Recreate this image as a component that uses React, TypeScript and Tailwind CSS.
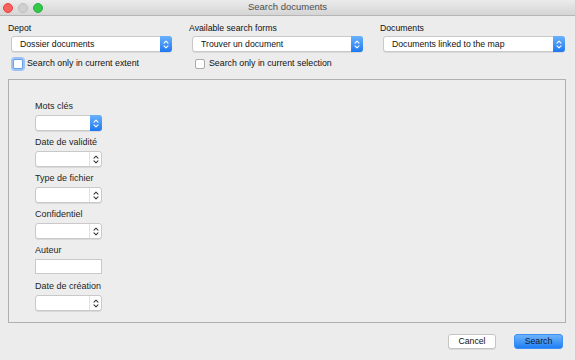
import React from 'react';

const font = { fontFamily: '"Liberation Sans", Arial, sans-serif' };

const Chevrons = ({ color }: { color: string }) => (
  <svg width="6" height="9" viewBox="0 0 6 9" fill="none" stroke={color} strokeWidth="1.1" strokeLinecap="round" strokeLinejoin="round">
    <path d="M1 3.2 L3 1.2 L5 3.2" />
    <path d="M1 5.8 L3 7.8 L5 5.8" />
  </svg>
);

const BlueSelect = ({ label, width }: { label: string; width: string }) => (
  <div className={`flex h-[16px] ${width} rounded-[3px] bg-white border border-[#c9c9c9] shadow-[0_1px_0_rgba(0,0,0,0.08)]`}>
    <div className="flex-1 pl-[8px] text-[8.7px] leading-[14px] text-[#111] truncate">{label}</div>
    <div className="w-[12px] -my-px -mr-px flex items-center justify-center rounded-r-[3px] bg-gradient-to-b from-[#69b1fb] to-[#1a78f0]">
      <Chevrons color="#ffffff" />
    </div>
  </div>
);

const Combo = ({ blue }: { blue?: boolean }) => (
  <div className="flex h-[16px] w-[67px] rounded-[3px] bg-white border border-[#c9c9c9] shadow-[0_1px_0_rgba(0,0,0,0.08)]">
    <div className="flex-1" />
    {blue ? (
      <div className="w-[12px] -my-px -mr-px flex items-center justify-center rounded-r-[3px] bg-gradient-to-b from-[#69b1fb] to-[#1a78f0]">
        <Chevrons color="#ffffff" />
      </div>
    ) : (
      <div className="w-[12px] flex items-center justify-center border-l border-[#e2e2e2]">
        <Chevrons color="#3a3a3a" />
      </div>
    )}
  </div>
);

const Checkbox = ({ focused }: { focused?: boolean }) => (
  <div
    className={`w-[10px] h-[10px] rounded-[2px] bg-white border ${
      focused ? 'border-[#6aa0e8] ring-2 ring-[#9cc3f5]' : 'border-[#a9a9a9]'
    }`}
  />
);

const fields = [
  { label: 'Mots clés', kind: 'blue' },
  { label: 'Date de validité', kind: 'combo' },
  { label: 'Type de fichier', kind: 'combo' },
  { label: 'Confidentiel', kind: 'combo' },
  { label: 'Auteur', kind: 'text' },
  { label: 'Date de création', kind: 'combo' },
];

export default function App() {
  return (
    <div className="w-[576px] h-[360px] bg-[#ececec] flex flex-col overflow-hidden border-r border-[#cfcfcf]" style={font}>
      {/* title bar */}
      <div className="relative h-[16px] flex items-center justify-center bg-gradient-to-b from-[#ebebeb] to-[#d5d5d5] border-b border-[#b5b5b5]">
        <div className="absolute left-[3px] top-[2.5px] flex gap-[5px]">
          <div className="w-[10px] h-[10px] rounded-full bg-[#fc605c] border border-[#e0443e]" />
          <div className="w-[10px] h-[10px] rounded-full bg-[#cfcfcf] border border-[#bdbdbd]" />
          <div className="w-[10px] h-[10px] rounded-full bg-[#34c84a] border border-[#2aac3b]" />
        </div>
        <span className="text-[9.5px] text-[#4d4d4d]">Search documents</span>
      </div>

      {/* top selectors */}
      <div className="flex pl-[8px] pt-[6px]">
        <div className="w-[181px] flex flex-col">
          <div className="h-[12px] text-[8.7px] leading-[12px] text-[#111]">Depot</div>
          <div className="mt-[2px] ml-[3px]">
            <BlueSelect label="Dossier documents" width="w-[161px]" />
          </div>
          <div className="mt-[6px] ml-[5px] flex items-center gap-[4px] h-[12px]">
            <Checkbox focused />
            <span className="text-[8.8px] text-[#111]">Search only in current extent</span>
          </div>
        </div>
        <div className="w-[191px] flex flex-col">
          <div className="h-[12px] text-[8.7px] leading-[12px] text-[#111]">Available search forms</div>
          <div className="mt-[2px] ml-[3px]">
            <BlueSelect label="Trouver un document" width="w-[171px]" />
          </div>
          <div className="mt-[6px] ml-[6px] flex items-center gap-[4px] h-[12px]">
            <Checkbox />
            <span className="text-[8.8px] text-[#111]">Search only in current selection</span>
          </div>
        </div>
        <div className="flex-1 flex flex-col">
          <div className="h-[12px] text-[8.7px] leading-[12px] text-[#111]">Documents</div>
          <div className="mt-[2px] ml-[3px]">
            <BlueSelect label="Documents linked to the map" width="w-[182px]" />
          </div>
        </div>
      </div>

      {/* search form panel */}
      <div className="mt-[9px] ml-[8px] mr-[9px] h-[244px] border border-[#b0b0b0] bg-[#ededed] pl-[26px] pt-[20px] flex flex-col">
        {fields.map((f) => (
          <div key={f.label} className="flex flex-col h-[36px]">
            <div className="h-[12px] text-[9px] leading-[12px] text-[#1e1e1e]">{f.label}</div>
            <div className="mt-[3px]">
              {f.kind === 'blue' && <Combo blue />}
              {f.kind === 'combo' && <Combo />}
              {f.kind === 'text' && <div className="h-[15px] w-[67px] bg-white border border-[#c9c9c9]" />}
            </div>
          </div>
        ))}
      </div>

      {/* buttons */}
      <div className="flex justify-end gap-[18px] pr-[12px] mt-[11px]">
        <button className="w-[48px] h-[15px] rounded-[3px] bg-white border border-[#c4c4c4] shadow-[0_1px_0_rgba(0,0,0,0.08)] text-[8.7px] leading-[13px] text-[#111]">
          Cancel
        </button>
        <button className="w-[49px] h-[15px] rounded-[3px] bg-gradient-to-b from-[#6cb3fa] to-[#1b7ef5] border border-[#3d8ff5] text-[8.7px] leading-[13px] text-[#0d1a33]">
          Search
        </button>
      </div>
    </div>
  );
}
